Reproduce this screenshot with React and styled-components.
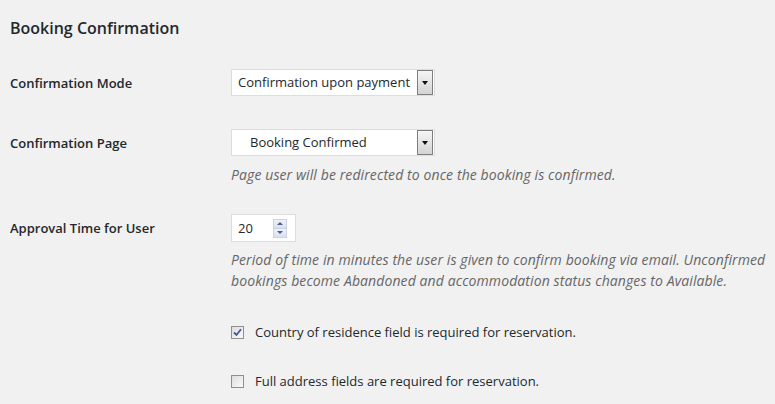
import React from 'react';
import styled, { createGlobalStyle } from 'styled-components';

const GlobalStyle = createGlobalStyle`
  html, body {
    margin: 0;
    padding: 0;
    background: #f1f1f1;
  }

  body {
    font-family: 'Open Sans', 'Noto Sans', sans-serif;
    font-size: 13px;
    color: #23282d;
  }
`;

const Page = styled('div')`
  padding: 0 10px;
  width: 775px;
  height: 404px;
  box-sizing: border-box;
  overflow: hidden;
`;

const Title = styled('h2')`
  margin: 0;
  padding-top: 17px;
  height: 37px;
  font-size: 16px;
  font-weight: 600;
  line-height: 22px;
`;

const Row = styled('div')`
  display: grid;
  grid-template-columns: 221px 1fr;
  align-items: start;
  padding: ${(p) => p.$pad || '15px 0 15px'};
`;

const Label = styled('div')`
  font-weight: 600;
  line-height: 20px;
  padding-top: 4px;
`;

const Field = styled('div')`
  display: flex;
  flex-direction: column;
  align-items: flex-start;
`;

const SelectBox = styled('div')`
  display: flex;
  align-items: center;
  width: 204px;
  height: 27px;
  box-sizing: border-box;
  background: #fff;
  border: 1px solid #ddd;
  padding-right: 1px;

  .value {
    flex: 1;
    padding-left: ${(p) => p.$indent || 6}px;
    line-height: 25px;
    white-space: nowrap;
    overflow: hidden;
  }
`;

const ArrowButton = styled('div')`
  width: 16px;
  height: 25px;
  box-sizing: border-box;
  border: 1px solid #7e7e7e;
  background: linear-gradient(#f6f6f6, #d3d3d3);
  display: flex;
  align-items: center;
  justify-content: center;

  &::after {
    content: '';
    border-left: 3.5px solid transparent;
    border-right: 3.5px solid transparent;
    border-top: 4px solid #111;
  }
`;

const Description = styled('p')`
  margin: ${(p) => p.$gap || 7}px 0 0;
  font-size: 14px;
  letter-spacing: 0.1px;
  font-style: italic;
  color: #666;
  line-height: ${(p) => p.$lh || 20}px;
  white-space: nowrap;
`;

const NumberBox = styled('div')`
  display: flex;
  align-items: center;
  width: 65px;
  height: 28px;
  box-sizing: border-box;
  background: #fff;
  border: 1px solid #ddd;
  padding: 0 8px 0 6px;

  .value {
    flex: 1;
    line-height: 26px;
  }
`;

const Spinner = styled('div')`
  display: flex;
  flex-direction: column;
  width: 14px;
  height: 19px;
  border: 1px solid #c9d3e3;
  box-sizing: border-box;
`;

const SpinButton = styled('div')`
  flex: 1;
  display: flex;
  align-items: center;
  justify-content: center;
  background: linear-gradient(#eef2f9, #d9e1ee);
  border-top: ${(p) => (p.$down ? '1px solid #c9d3e3' : 'none')};

  &::after {
    content: '';
    border-left: 3px solid transparent;
    border-right: 3px solid transparent;
    ${(p) => (p.$down ? 'border-top: 3px solid #4d6185;' : 'border-bottom: 3px solid #4d6185;')}
  }
`;

const CheckRow = styled('label')`
  display: flex;
  align-items: center;
  gap: 11px;
  line-height: 20px;
`;

const Box = styled('span')`
  width: 13px;
  height: 13px;
  box-sizing: border-box;
  border: 1px solid #8e8f8f;
  background: linear-gradient(135deg, #dcdcdc, #fbfbfb);
  display: flex;
  align-items: center;
  justify-content: center;
`;

function Checkbox({ checked }) {
  return (
    <Box>
      {checked && (
        <svg width="9" height="9" viewBox="0 0 9 9">
          <path d="M1 4.5 L3.5 7 L8 1.2" fill="none" stroke="#3d5a96" strokeWidth="1.8" />
        </svg>
      )}
    </Box>
  );
}

export default function App() {
  return (
    <Page>
      <GlobalStyle />
      <Title>Booking Confirmation</Title>

      <Row $pad="15px 0 18px">
        <Label>Confirmation Mode</Label>
        <Field>
          <SelectBox>
            <span className="value">Confirmation upon payment</span>
            <ArrowButton />
          </SelectBox>
        </Field>
      </Row>

      <Row $pad="15px 0 14px">
        <Label>Confirmation Page</Label>
        <Field>
          <SelectBox $indent={18}>
            <span className="value">Booking Confirmed</span>
            <ArrowButton />
          </SelectBox>
          <Description $gap={9}>Page user will be redirected to once the booking is confirmed.</Description>
        </Field>
      </Row>

      <Row $pad="15px 0 16px">
        <Label>Approval Time for User</Label>
        <Field>
          <NumberBox>
            <span className="value">20</span>
            <Spinner>
              <SpinButton />
              <SpinButton $down />
            </Spinner>
          </NumberBox>
          <Description $gap={7} $lh={21}>
            Period of time in minutes the user is given to confirm booking via email. Unconfirmed
            <br />
            bookings become Abandoned and accommodation status changes to Available.
          </Description>
        </Field>
      </Row>

      <Row $pad="15px 0 14px">
        <div />
        <CheckRow>
          <Checkbox checked />
          Country of residence field is required for reservation.
        </CheckRow>
      </Row>

      <Row>
        <div />
        <CheckRow>
          <Checkbox />
          Full address fields are required for reservation.
        </CheckRow>
      </Row>
    </Page>
  );
}
